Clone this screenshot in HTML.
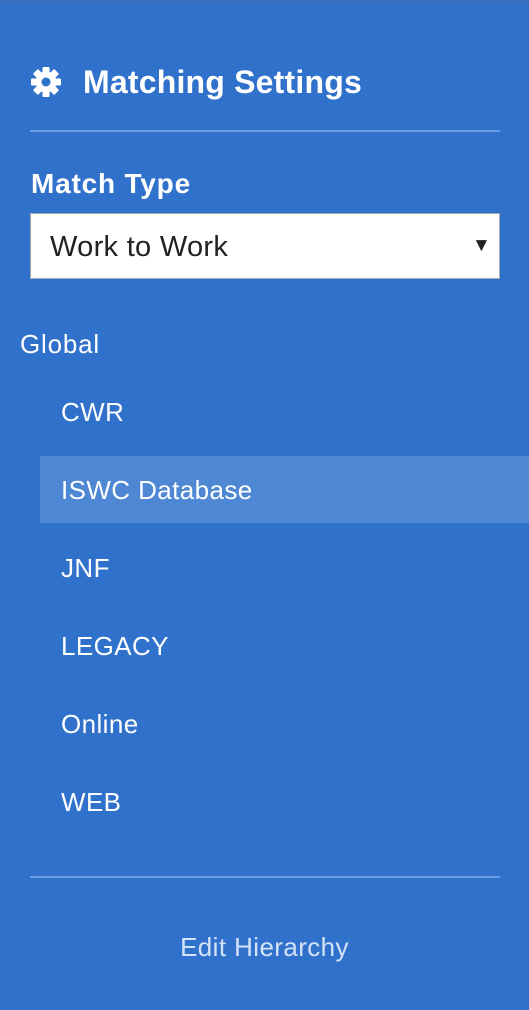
<!DOCTYPE html>
<html><head><style>
body{margin:0;width:529px;height:1010px;background:#3072cb;font-family:"Liberation Sans",sans-serif;color:#fff;position:relative;overflow:hidden}
.top{position:absolute;left:0;top:0;width:529px;height:4px;background:linear-gradient(#3a6cb8,#3072cb)}
.a{position:absolute;white-space:nowrap}
.hr{position:absolute;left:30px;width:470px;height:2px;background:#6a9de3}
.it{position:absolute;left:61px;font-size:26px;letter-spacing:0.4px;line-height:30px}
</style></head><body>
<div class="top"></div>
<svg class="a" style="left:30px;top:66px" width="32" height="32" viewBox="0 0 32 32">
<g fill="#fff" transform="translate(16 16)">
<g id="t"><rect x="-3.5" y="-15" width="7" height="8" rx="1"/></g>
<use href="#t" transform="rotate(45)"/><use href="#t" transform="rotate(90)"/><use href="#t" transform="rotate(135)"/><use href="#t" transform="rotate(180)"/><use href="#t" transform="rotate(225)"/><use href="#t" transform="rotate(270)"/><use href="#t" transform="rotate(315)"/>
<circle r="10.5"/></g><circle cx="16" cy="16" r="4.5" fill="#3072cb"/></svg>
<div class="a" style="left:83px;top:63px;font-size:32px;font-weight:bold;line-height:38px;letter-spacing:0.2px">Matching Settings</div>
<div class="hr" style="top:130px"></div>
<div class="a" style="left:31px;top:167px;font-size:28px;font-weight:bold;line-height:34px;letter-spacing:0.8px">Match Type</div>
<div class="a" style="left:30px;top:213px;width:468px;height:64px;background:#fff;border:1px solid #aaa;color:#222">
<span class="a" style="left:19px;top:17px;font-size:29px;line-height:32px;letter-spacing:0.3px">Work to Work</span>
<span class="a" style="left:441px;top:21px;font-size:19px">&#9660;</span></div>
<div class="a" style="left:20px;top:329px;font-size:26px;line-height:30px;letter-spacing:0.8px">Global</div>
<div class="a" style="left:40px;top:456px;width:489px;height:67px;background:#4e87d4"></div>
<div class="it" style="top:397px">CWR</div>
<div class="it" style="top:475px">ISWC Database</div>
<div class="it" style="top:553px">JNF</div>
<div class="it" style="top:631px">LEGACY</div>
<div class="it" style="top:709px">Online</div>
<div class="it" style="top:787px">WEB</div>
<div class="hr" style="top:876px"></div>
<div class="a" style="left:0;width:529px;text-align:center;top:932px;font-size:26px;letter-spacing:0.4px;line-height:30px;color:#d3e2f6">Edit Hierarchy</div>
</body></html>
